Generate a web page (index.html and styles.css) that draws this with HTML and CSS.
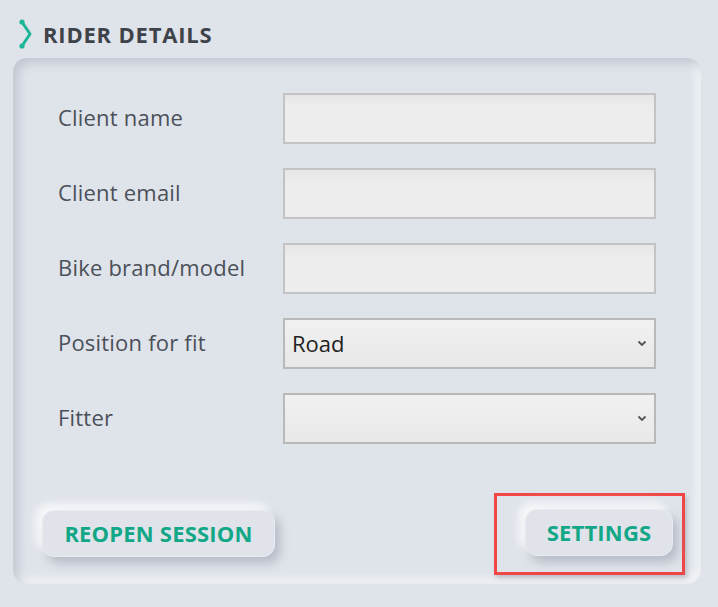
FILE: index.html
```html
<!DOCTYPE html>
<html>
<head>
<meta charset="utf-8">
<link rel="stylesheet" href="styles.css">
</head>
<body>
<div class="page">
  <h2 class="title">
    <svg class="title-icon" width="14" height="30" viewBox="0 0 14 30"><polyline points="3,3 11,15 3,27" fill="none" stroke="#1db597" stroke-width="3" stroke-linecap="round" stroke-linejoin="round"/><circle cx="3" cy="3" r="2.6" fill="#1db597"/><circle cx="3" cy="27" r="2.6" fill="#1db597"/></svg>
    <span>RIDER DETAILS</span>
  </h2>
  <div class="card">
    <div class="form">
      <label class="label">Client name</label>
      <input class="field" type="text">
      <label class="label">Client email</label>
      <input class="field" type="text">
      <label class="label">Bike brand/model</label>
      <input class="field" type="text">
      <label class="label">Position for fit</label>
      <div class="select-wrap">
        <select class="field select"><option>Road</option></select>
        <svg class="arrow" width="10" height="7" viewBox="0 0 10 7"><polyline points="1.5,1.5 5,5 8.5,1.5" fill="none" stroke="#555" stroke-width="1.8"/></svg>
      </div>
      <label class="label">Fitter</label>
      <div class="select-wrap">
        <select class="field select"><option></option></select>
        <svg class="arrow" width="10" height="7" viewBox="0 0 10 7"><polyline points="1.5,1.5 5,5 8.5,1.5" fill="none" stroke="#555" stroke-width="1.8"/></svg>
      </div>
    </div>
    <div class="actions">
      <button class="btn btn-reopen">REOPEN SESSION</button>
      <div class="highlight">
        <button class="btn btn-settings">SETTINGS</button>
      </div>
    </div>
  </div>
</div>
</body>
</html>
```
FILE: styles.css
```css
html, body {
  margin: 0;
  padding: 0;
  background: #dfe3ea;
}
body {
  font-family: "Open Sans", "Noto Sans", sans-serif;
  color: #4a4f58;
}
.page {
  width: 718px;
  height: 607px;
  padding: 18px 0 0 13px;
  box-sizing: border-box;
}
.title {
  margin: 0 0 8px 6px;
  height: 32px;
  display: flex;
  align-items: center;
  gap: 10px;
  font-size: 22px;
  font-weight: 700;
  color: #3e4249;
  letter-spacing: 0.8px;
}
.title-icon { display: block; }
.card {
  width: 688px;
  height: 526px;
  box-sizing: border-box;
  border-radius: 14px;
  background: #dfe3ea;
  box-shadow: inset 5px 5px 10px rgba(160, 166, 180, 0.45), inset -6px -6px 8px rgba(255, 255, 255, 0.55);
  padding: 35px 44px 0 45px;
  display: flex;
  flex-direction: column;
}
.form {
  display: grid;
  grid-template-columns: 225px 373px;
  row-gap: 24px;
  align-items: center;
}
.label {
  font-size: 22px;
  color: #4b5059;
  letter-spacing: 0.2px;
  padding-bottom: 3px;
}
.field {
  width: 373px;
  height: 51px;
  box-sizing: border-box;
  border: 2px solid #c3c3c3;
  background: linear-gradient(#e6e6e6, #ededed 12px, #ededed);
  margin: 0;
  border-radius: 0;
  font-family: inherit;
  font-size: 22px;
  color: #222;
  outline: none;
}
.select-wrap { position: relative; }
.select {
  appearance: none;
  -webkit-appearance: none;
  padding: 0 0 2px 7px;
  background: linear-gradient(#f1f1f1, #e8e8e8);
  border-color: #b9b9b9;
}
.arrow {
  position: absolute;
  right: 9px;
  top: 22px;
}
.actions {
  margin-top: 49px;
  display: flex;
  justify-content: space-between;
  align-items: flex-start;
}
.btn {
  font-family: inherit;
  font-size: 22px;
  font-weight: 700;
  letter-spacing: 0.2px;
  color: #12a787;
  background: #e0e4ea;
  border: 1px solid #e8ebf0;
  border-radius: 12px;
  height: 47px;
  padding: 0 0 2px;
  box-shadow: 5px 6px 10px rgba(150, 156, 170, 0.55), -6px -6px 10px rgba(255, 255, 255, 0.8);
}
.btn-reopen {
  width: 233px;
  margin: 17px 0 0 -16px;
}
.btn-settings {
  width: 148px;
}
.highlight {
  border: 3px solid #f04646;
  width: 191px;
  height: 82px;
  box-sizing: border-box;
  margin-right: -28px;
  display: flex;
  align-items: flex-start;
  justify-content: flex-end;
  padding: 13px 9px 0 0;
  box-shadow: 2px 3px 4px rgba(120, 120, 130, 0.35);
}
```
